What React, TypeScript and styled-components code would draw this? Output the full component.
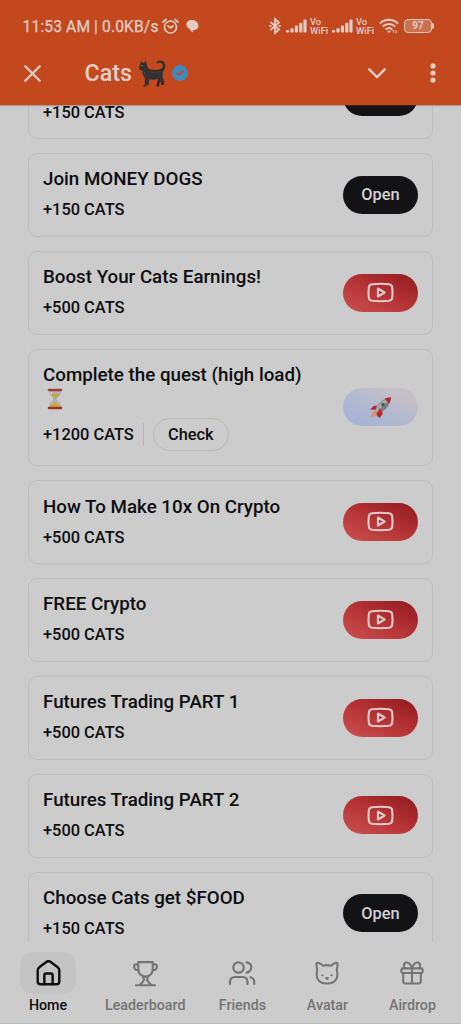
import React from "react";
import styled, { createGlobalStyle } from "styled-components";

const GlobalStyle = createGlobalStyle`
  *, *::before, *::after { box-sizing: border-box; }
  body { margin: 0; background: #cccccc; font-family: Roboto, "Noto Sans", sans-serif; overflow: hidden; }
  svg { display: block; flex: none; }
`;

const Screen = styled.div`
  display: flex;
  flex-direction: column;
  width: 461px;
  height: 1024px;
  background: #cccccc;
  color: #0e0e10;
  overflow: hidden;
`;

const Header = styled.header`
  flex: none;
  height: 105px;
  background: #c4481d;
  color: #e2cdc6;
  box-shadow: 0 1px 1px rgba(110, 70, 50, 0.35);
  z-index: 1;
`;

const StatusBar = styled.div`
  display: flex;
  align-items: center;
  height: 52px;
  padding: 0 27px 0 22.6px;
`;

const Clock = styled.span`
  font-size: 15.6px;
  line-height: 20px;
  letter-spacing: 0.13px;
  white-space: nowrap;
  width: 139px;
  padding-top: 1px;
  -webkit-text-stroke: 0.25px currentColor;
`;

const StatusIcons = styled.div`
  display: flex;
  align-items: center;
  margin-left: auto;
`;

const VoWifi = styled.div`
  display: flex;
  flex-direction: column;
  width: 22px;
  padding-left: 3px;
  font-size: 9.4px;
  font-weight: 500;
  line-height: 9px;
`;

const TitleBar = styled.div`
  display: flex;
  align-items: center;
  height: 42px;
  padding: 0 25px 0 24px;
`;

const AppTitle = styled.h1`
  display: flex;
  align-items: center;
  margin: 0 auto 0 43.6px;
  font-size: 23.3px;
  font-weight: 500;
  line-height: 28px;
`;

const Feed = styled.main`
  flex: none;
  height: 837px;
  padding: 0 28px;
  overflow: hidden;
`;

const TaskList = styled.ul`
  display: flex;
  flex-direction: column;
  gap: 14.2px;
  margin: -49.7px 0 0;
  padding: 0;
  list-style: none;
`;

const Card = styled.li`
  display: flex;
  align-items: center;
  justify-content: space-between;
  flex: none;
  padding: 13.3px 14px 14px;
  border: 1px solid #bfbfbf;
  border-radius: 9px;
`;

const TaskText = styled.div`
  display: flex;
  flex-direction: column;
  gap: 6.9px;
`;

const TaskName = styled.div`
  font-size: 18.75px;
  font-weight: 500;
  line-height: 24px;
  white-space: nowrap;
`;

const HourglassLine = styled.div`
  display: flex;
  align-items: center;
  height: 24px;
  padding-left: 4px;
`;

const RewardRow = styled.div`
  display: flex;
  align-items: center;
  min-height: 23.5px;
  font-size: 16.4px;
  font-weight: 500;
  line-height: 23.5px;
`;

const Divider = styled.span`
  width: 1px;
  height: 23px;
  margin: 0 9px;
  background: #b7b7b7;
`;

const CheckButton = styled.button`
  width: 76px;
  height: 33px;
  padding: 0;
  border: 1px solid #bababa;
  border-radius: 17px;
  background: transparent;
  color: inherit;
  font: 500 16.4px Roboto, sans-serif;
`;

type Action = "open" | "video" | "rocket";

const fills: Record<Action, string> = {
  open: "#131315",
  video: "linear-gradient(25deg, #c94e4e 5%, #b43234 52%, #931c20 95%)",
  rocket: "linear-gradient(25deg, #a9b5d4 20%, #b4bacf 50%, #c5bfc6 80%)",
};

const ActionButton = styled.button<{ $kind: Action }>`
  display: flex;
  align-items: center;
  justify-content: center;
  flex: none;
  width: 75px;
  height: 38px;
  padding: 0;
  border: 0;
  border-radius: 19px;
  background: ${({ $kind }) => fills[$kind]};
  color: #d2d2d2;
  font: 500 16.4px Roboto, sans-serif;
`;

const Nav = styled.nav`
  display: flex;
  gap: 29px;
  flex: none;
  height: 82px;
  padding: 10px 20px 0;
  border-bottom: 1px solid #b9b9b9;
  background: #cccccc;
`;

const NavItem = styled.a<{ $active?: boolean }>`
  display: flex;
  flex-direction: column;
  align-items: center;
  flex: none;
  min-width: 56px;
  color: ${({ $active }) => ($active ? "#0e0e10" : "#747474")};
`;

const NavIcon = styled.span<{ $active?: boolean }>`
  display: flex;
  align-items: center;
  justify-content: center;
  width: 56px;
  height: 42px;
  border-radius: 13px;
  background: ${({ $active }) => ($active ? "#c4c4c4" : "transparent")};
`;

const NavLabel = styled.span`
  margin-top: 3px;
  font-size: 14.25px;
  font-weight: 500;
  line-height: 17px;
`;

const AlarmIcon = () => (
  <svg width="17" height="17" viewBox="0 0 17 17" fill="none" stroke="currentColor" strokeWidth="1.7" strokeLinecap="round">
    <circle cx="8.5" cy="9" r="6" />
    <path d="M1 4 4 1.3M16 4l-3-2.7M6 8l2.5 2L11 8" />
  </svg>
);

const ChatIcon = () => (
  <svg width="13" height="13" viewBox="0 0 13 13" fill="currentColor">
    <path d="M6 0C2.7 0 .4 2 .4 4.6c0 2 1.3 3.6 3.3 4.2C3.9 10 5 11.3 6.5 12.5L7 10.3c3 0 5.4-1.7 5.4-4.3C12.4 2.5 9.5 0 6 0Z" />
  </svg>
);

const BluetoothIcon = () => (
  <svg width="12" height="18" viewBox="0 0 12 18" fill="none" stroke="currentColor" strokeWidth="1.8">
    <path d="M1.5 5 10 12.5 6 16V2l4 3.5L1.5 13" />
    <path d="M.4 9h2M9.6 9h2" strokeWidth="2" />
  </svg>
);

const SignalIcon = () => (
  <svg width="21" height="14" viewBox="0 0 21 14" fill="currentColor">
    <rect x="0" y="11" width="3.2" height="2.5" rx="1" />
    <rect x="4.4" y="9.3" width="3.2" height="4.2" rx="1" />
    <rect x="8.8" y="6.5" width="3.2" height="7" rx="1" />
    <rect x="13.2" y="3.7" width="3.2" height="9.8" rx="1" />
    <rect x="17.4" y=".5" width="3.2" height="13" rx="1" />
  </svg>
);

const WifiIcon = () => (
  <svg width="20" height="16" viewBox="0 0 20 16" fill="none" stroke="currentColor" strokeWidth="2">
    <path d="M.8 5.5c5.3-5.1 13-5.1 18.4 0M3.7 8.6c3.7-3.5 9-3.5 12.6 0M6.6 11.6c2.1-1.9 4.7-1.9 6.8 0" />
    <path d="m8.3 13.3 1.7 1.8 1.7-1.8c-1-1-2.4-1-3.4 0Z" fill="currentColor" stroke="none" />
    <path d="M14.5 15v-3m0 0-1 1m3.5-1v3m0 0 1-1" strokeWidth="1" />
  </svg>
);

const BatteryShell = styled.div`
  display: flex;
  align-items: center;
  margin-left: 5px;
`;

const BatteryBody = styled.div`
  width: 28px;
  height: 14px;
  border: 1.5px solid #dfc4bb;
  border-radius: 4px;
  background: #ca714f;
  font: 700 10px/12px Roboto, sans-serif;
  text-align: center;
`;

const BatteryTip = styled.span`
  width: 2px;
  height: 6px;
  border-radius: 0 2px 2px 0;
  background: #dfc4bb;
`;

const CloseIcon = () => (
  <svg width="17" height="17" viewBox="0 0 17 17" stroke="currentColor" strokeWidth="2.3" strokeLinecap="round">
    <path d="m1.3 1.3 14.4 14.4m0-14.4L1.300 15.700" />
  </svg>
);

const CatEmoji = () => (
  <svg width="28" height="27" viewBox="0 0 28 27">
    <path
      d="M1 7 2 5l1-4 2.400 2L8 .8 9 5.500c.4 2 1.500 3.200 3.500 3.900 3 .8 6 0 8.500 0 1.700-.2 2.700-.7 3.300-1.800.7-1.200.5-3-.4-4-.9-1.100-2.900-1.200-4-.4-.9.5-1.800-.6-1-1.400C21-.2 24.300 0 26 2.200c1.700 2.200 1.500 5.200.3 7.300l-1.600 2.500c.2 2.700-.3 4.400.3 6.200.8 1.500 1.600 2.800 1.200 4.700l-.1 2.100h-3c0-3.100-1.500-4.100-3.400-6-2.700.9-5.500.8-8.700.4L10.800 25H8.600l-.2 1.500H5.200c0-.9.8-1.300 1.700-1.700L6.800 18c-1.800-2-2.500-4.100-2.300-7.100L1 9Z"
      fill="#34302f"
    />
    <path d="m20.200 18.500-1.400 6.200-.8 1.800h3l1-5.500" fill="#292626" />
    <path d="m5.500 10 2.700 7.500M12 11.500c3 1.500 6.500 1 9.500.4" fill="none" stroke="#4d4642" strokeWidth=".8" />
    <circle cx="4" cy="5.700" r=".7" fill="#867449" />
  </svg>
);

const VerifiedIcon = () => (
  <svg width="18" height="18" viewBox="0 0 18 18">
    <path d="m9 .5 2.300 1.300 2.700.1.900 2.600 2.100 1.700-.6 2.800.6 2.700-2.100 1.700-.9 2.600-2.700.1L9 17.500l-2.300-1.400-2.700-.1-.9-2.600L1 11.700 1.600 9 1 6.200l2.100-1.700L4 1.900l2.700-.1Z" fill="#4289bf" />
    <path d="m6 9 2 1.900 3.900-3.800" fill="none" stroke="#c4481d" strokeWidth="1.500" strokeLinecap="round" />
  </svg>
);

const ChevronIcon = () => (
  <svg width="18" height="11" viewBox="0 0 18 11" fill="none" stroke="currentColor" strokeWidth="2.400" strokeLinecap="round" strokeLinejoin="round">
    <path d="m1.300 1.300 7.700 7.900 7.700-7.900" />
  </svg>
);

const MoreIcon = styled((props: { className?: string }) => (
  <svg className={props.className} width="6" height="20" viewBox="0 0 6 20" fill="currentColor">
    <circle cx="3" cy="2.900" r="2.600" />
    <circle cx="3" cy="10" r="2.600" />
    <circle cx="3" cy="17.100" r="2.600" />
  </svg>
))`
  margin-left: 44px;
`;

const VideoIcon = () => (
  <svg width="27" height="21" viewBox="0 0 28 22" fill="none" stroke="#dfcaca" strokeWidth="2.200" strokeLinejoin="round">
    <path d="M5 2.300c6-.7 12-.7 18 0 2 .3 3 1.300 3.200 3 .5 3.800.5 7.600 0 11.400-.2 1.700-1.200 2.700-3.200 3-6 .6-12 .6-18 0-2-.3-3-1.300-3.200-3-.5-3.800-.5-7.600 0-11.400.2-1.700 1.200-2.700 3.200-3Z" />
    <path d="m11.300 6.800 7 4.200-7 4.200Z" />
  </svg>
);

const RocketEmoji = () => (
  <svg width="23" height="23" viewBox="0 0 23 23">
    <path d="m7 15-3 .7-2.600 5.500c3 .2 5.200-.9 6.800-3.700Z" fill="#e58c6d" />
    <path d="M8.500 10 5 9.700 1 13.500l5.500.3ZM13.300 14.800l.2 3.500-3.300 4-1.300-5.500Z" fill="#b32625" />
    <path d="M6 16.500C6.500 9.500 11.500 3 21.800 1.200 21 10.500 14.500 16 8 18Z" fill="#7c7d7f" />
    <path d="M6 16.500C7 10 11.800 4.500 17 3.200L19 5C14.500 10 11 14 7 17.200Z" fill="#a6a7aa" />
    <path d="M15.500 2.800c2.100-1 4.300-1.500 6.300-1.600 0 2.200-.6 4.400-1.600 6.200Z" fill="#b92826" />
    <path d="m11.200 11.800-3.700 6.700 1.600 3 3.300-5.500Z" fill="#bb2725" />
    <circle cx="14" cy="8.700" r="1.700" fill="#46515b" stroke="#686b6e" strokeWidth=".6" />
  </svg>
);

const HourglassEmoji = () => (
  <svg width="16" height="22" viewBox="0 0 16 22">
    <path d="M2 2h12v2c0 4-4 5-4 7s4 3 4 7v2H2v-2c0-4 4-5 4-7S2 8 2 4Z" fill="#a9b4c2" />
    <path d="M3.500 6h9.300C11.700 8.400 9 9 8.300 12L7.500 9.500Z" fill="#d0a51e" />
    <path d="M8 13.500 3.500 18v1.500h9V18Z" fill="#d5a51c" />
    <path d="m4 4 .7 2.300" stroke="#d6dde2" />
    <rect x=".7" y=".7" width="14.600" height="2.600" rx="1.200" fill="#a83a35" />
    <rect x=".7" y="18.700" width="14.600" height="2.600" rx="1.200" fill="#98332f" />
  </svg>
);

const iconProps = {
  width: 26,
  height: 26,
  viewBox: "0 0 28 28",
  fill: "none",
  stroke: "currentColor",
  strokeWidth: 2.2,
  strokeLinecap: "round" as const,
  strokeLinejoin: "round" as const,
};

const HomeIcon = () => (
  <svg {...iconProps} width={27} height={27} strokeWidth={2.5}>
    <path d="M2.800 10.500c0-1.300.6-2.100 1.600-2.900l7.700-5.700c1.200-.9 2.600-.9 3.800 0l7.700 5.700c1 .8 1.600 1.600 1.600 2.900v11.700c0 2-1 3-3 3H5.800c-2 0-3-1-3-3Z" />
    <path d="M9.700 25v-9.200c0-1.100.7-1.800 1.800-1.800h5c1.100 0 1.800.7 1.800 1.800V25" />
  </svg>
);

const TrophyIcon = () => (
  <svg {...iconProps} width={27} height={27}>
    <path d="M6.500 2.200h15v7.300c0 4.600-3.300 7.800-7.500 7.800s-7.500-3.200-7.500-7.800ZM6.500 4.500H3.800c-2.600 0-2.600 6.300 3 6.300M21.500 4.500h2.700c2.600 0 2.600 6.300-3 6.300M11.300 17l1.200 3.500c-.6 2-2.200 3-4.500 5.500M16.700 17l-1.200 3.500c.6 2 2.200 3 4.500 5.500M4.200 26.200h19.600" />
  </svg>
);

const FriendsIcon = () => (
  <svg {...iconProps} width={28} height={28}>
    <circle cx="10.500" cy="8.500" r="5.200" />
    <path d="M2 25v-2c0-3.300 1.700-5 5-5h7.500c3.300 0 5 1.700 5 5v2M18.500 3.400c4.300.6 6 3.900 4.200 7.300-.8 1.600-2.300 2.600-4.200 2.900M22.500 18.200c2.300.5 3.700 2 3.700 4.800v2" />
  </svg>
);

const CatIcon = () => (
  <svg {...iconProps}>
    <path d="M4.300 2.900c2.300.5 3.900 1.600 5.200 3.200 2.800-.7 6.200-.7 9 0 1.300-1.600 2.900-2.700 5.200-3.200 1.200-.2 1.700.4 1.700 1.600-.1 2.800-.8 4.500-.8 6.500.7 2.600.9 5.500.1 8-1.500 4.200-6 6.400-10.700 6.400S4.800 23.200 3.300 19c-.8-2.500-.6-5.400.1-8 0-2-.7-3.700-.8-6.500 0-1.200.5-1.800 1.700-1.600Z" />
    <circle cx="9" cy="16.500" r="1.200" fill="currentColor" stroke="none" />
    <circle cx="19" cy="16.500" r="1.200" fill="currentColor" stroke="none" />
    <path d="M13 19.500h2l-1 1Z" />
  </svg>
);

const GiftIcon = () => (
  <svg {...iconProps}>
    <rect x="2.500" y="9" width="23" height="5" rx="1.500" />
    <path d="M4.500 14v9c0 1.500.8 2.300 2.300 2.300h14.400c1.500 0 2.300-.8 2.300-2.300v-9M14 9v16M14 9C12.500 4.500 10.300 2.500 7.800 2.800 4.800 3.200 4.500 7.500 6.800 9M14 9c1.500-4.500 3.700-6.500 6.200-6.200 3 .4 3.300 4.700 1 6.200" />
  </svg>
);

interface Task {
  name: string;
  reward: string;
  action: Action;
  check?: boolean;
}

const tasks: Task[] = [
  { name: "", reward: "+150 CATS", action: "open" },
  { name: "Join MONEY DOGS", reward: "+150 CATS", action: "open" },
  { name: "Boost Your Cats Earnings!", reward: "+500 CATS", action: "video" },
  { name: "Complete the quest (high load)", reward: "+1200 CATS", action: "rocket", check: true },
  { name: "How To Make 10x On Crypto", reward: "+500 CATS", action: "video" },
  { name: "FREE Crypto", reward: "+500 CATS", action: "video" },
  { name: "Futures Trading PART 1", reward: "+500 CATS", action: "video" },
  { name: "Futures Trading PART 2", reward: "+500 CATS", action: "video" },
  { name: "Choose Cats get $FOOD", reward: "+150 CATS", action: "open" },
];

const TaskCard = ({ name, reward, action, check }: Task) => (
  <Card>
    <TaskText>
      <TaskName>
        {name || "\u00a0"}
        {check && (
          <HourglassLine>
            <HourglassEmoji />
          </HourglassLine>
        )}
      </TaskName>
      <RewardRow>
        {reward}
        {check && (
          <>
            <Divider />
            <CheckButton>Check</CheckButton>
          </>
        )}
      </RewardRow>
    </TaskText>
    <ActionButton $kind={action}>
      {action === "open" && "Open"}
      {action === "video" && <VideoIcon />}
      {action === "rocket" && <RocketEmoji />}
    </ActionButton>
  </Card>
);

const tabs = [
  { label: "Home", Icon: HomeIcon },
  { label: "Leaderboard", Icon: TrophyIcon },
  { label: "Friends", Icon: FriendsIcon },
  { label: "Avatar", Icon: CatIcon },
  { label: "Airdrop", Icon: GiftIcon },
];

const StatusGlyph = styled.span<{ $left: number }>`
  margin-left: ${({ $left }) => $left}px;
`;

export default function App() {
  return (
    <Screen>
      <GlobalStyle />
      <Header>
        <StatusBar>
          <Clock>11:53 AM | 0.0KB/s</Clock>
          <StatusGlyph $left={0}><AlarmIcon /></StatusGlyph>
          <StatusGlyph $left={7}><ChatIcon /></StatusGlyph>
          <StatusIcons>
            <BluetoothIcon />
            <StatusGlyph $left={5}><SignalIcon /></StatusGlyph>
            <VoWifi><span>Vo</span><span>WiFi</span></VoWifi>
            <StatusGlyph $left={3}><SignalIcon /></StatusGlyph>
            <VoWifi><span>Vo</span><span>WiFi</span></VoWifi>
            <StatusGlyph $left={4}><WifiIcon /></StatusGlyph>
            <BatteryShell>
              <BatteryBody>97</BatteryBody>
              <BatteryTip />
            </BatteryShell>
          </StatusIcons>
        </StatusBar>
        <TitleBar>
          <CloseIcon />
          <AppTitle>
            Cats
            <StatusGlyph $left={6}><CatEmoji /></StatusGlyph>
            <StatusGlyph $left={5}><VerifiedIcon /></StatusGlyph>
          </AppTitle>
          <ChevronIcon />
          <MoreIcon />
        </TitleBar>
      </Header>
      <Feed>
        <TaskList>
          {tasks.map((task, i) => (
            <TaskCard key={i} {...task} />
          ))}
        </TaskList>
      </Feed>
      <Nav>
        {tabs.map(({ label, Icon }, i) => (
          <NavItem key={label} $active={i === 0}>
            <NavIcon $active={i === 0}>
              <Icon />
            </NavIcon>
            <NavLabel>{label}</NavLabel>
          </NavItem>
        ))}
      </Nav>
    </Screen>
  );
}
